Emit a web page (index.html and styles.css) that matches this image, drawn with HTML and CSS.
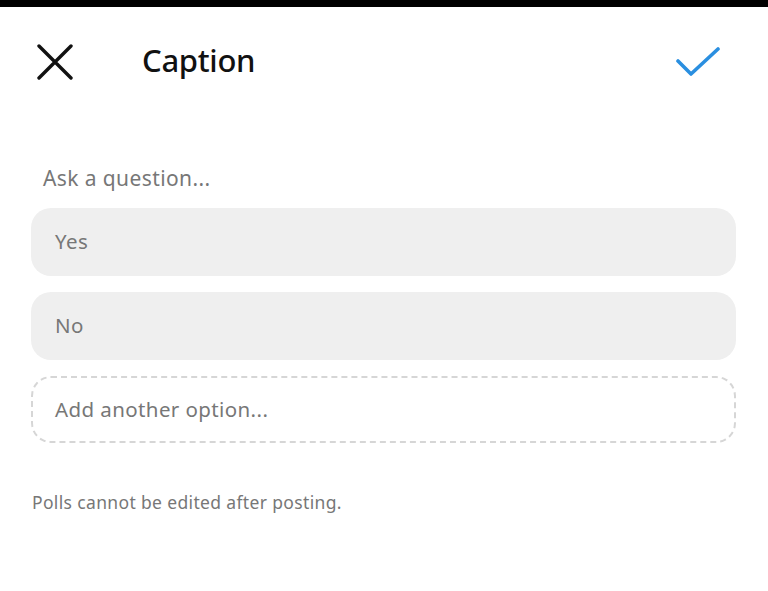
FILE: index.html
```html
<!DOCTYPE html>
<html lang="en">
<head>
    <meta charset="UTF-8">
    <meta name="viewport" content="width=device-width, initial-scale=1.0">
    <title>Caption</title>
    <link rel="stylesheet" href="styles.css">
</head>
<body>
    <div class="status-bar"></div>

    <header class="top-bar">
        <button class="icon-btn close-btn" aria-label="Close">
            <svg width="36" height="36" viewBox="0 0 36 36">
                <path d="M2 2 L34 34 M34 2 L2 34" stroke="#111" stroke-width="3.4" stroke-linecap="round" fill="none"/>
            </svg>
        </button>
        <h1 class="title">Caption</h1>
        <button class="icon-btn done-btn" aria-label="Done">
            <svg width="44" height="30" viewBox="0 0 44 30">
                <path d="M2 14 L15 27 L42 2" stroke="#2a8fe0" stroke-width="3.6" stroke-linecap="round" stroke-linejoin="round" fill="none"/>
            </svg>
        </button>
    </header>

    <main class="poll">
        <p class="question">Ask a question...</p>

        <div class="options">
            <div class="option">Yes</div>
            <div class="option">No</div>
            <div class="option add-option">Add another option...</div>
        </div>

        <p class="note">Polls cannot be edited after posting.</p>
    </main>
</body>
</html>
```

FILE: styles.css
```css
/* Poll caption screen */
body {
    margin: 0;
    background-color: #fff;
    font-family: 'Noto Sans', 'Liberation Sans', sans-serif;
    color: #111;
}

.status-bar {
    height: 7px;
    background-color: #000;
}

.top-bar {
    display: flex;
    align-items: center;
    height: 110px;
    padding: 0 48px 0 37px;
}

.icon-btn {
    background: none;
    border: none;
    padding: 0;
    display: flex;
    cursor: pointer;
}

.title {
    margin: 0 0 4px 69px;
    font-size: 31px;
    font-weight: 500;
    letter-spacing: -0.3px;
    flex: 1;
}

.poll {
    padding: 0 32px 0 31px;
}

.question {
    margin: 47px 0 0 12px;
    font-size: 21px;
    line-height: 28px;
    letter-spacing: 0.4px;
    color: #777;
}

.options {
    display: flex;
    flex-direction: column;
    gap: 16px;
    margin-top: 16px;
}

.option {
    height: 68px;
    border-radius: 20px;
    background-color: #efefef;
    padding: 0 24px 2px;
    display: flex;
    align-items: center;
    font-size: 20.5px;
    letter-spacing: 0.4px;
    color: #777;
    box-sizing: border-box;
}

.add-option {
    background-color: transparent;
    border: 2px dashed #d6d6d6;
    height: 67px;
    padding: 0 22px 2px;
}

.note {
    margin: 47px 0 0 1px;
    font-size: 17.5px;
    letter-spacing: 0.35px;
    color: #777;
}
```
